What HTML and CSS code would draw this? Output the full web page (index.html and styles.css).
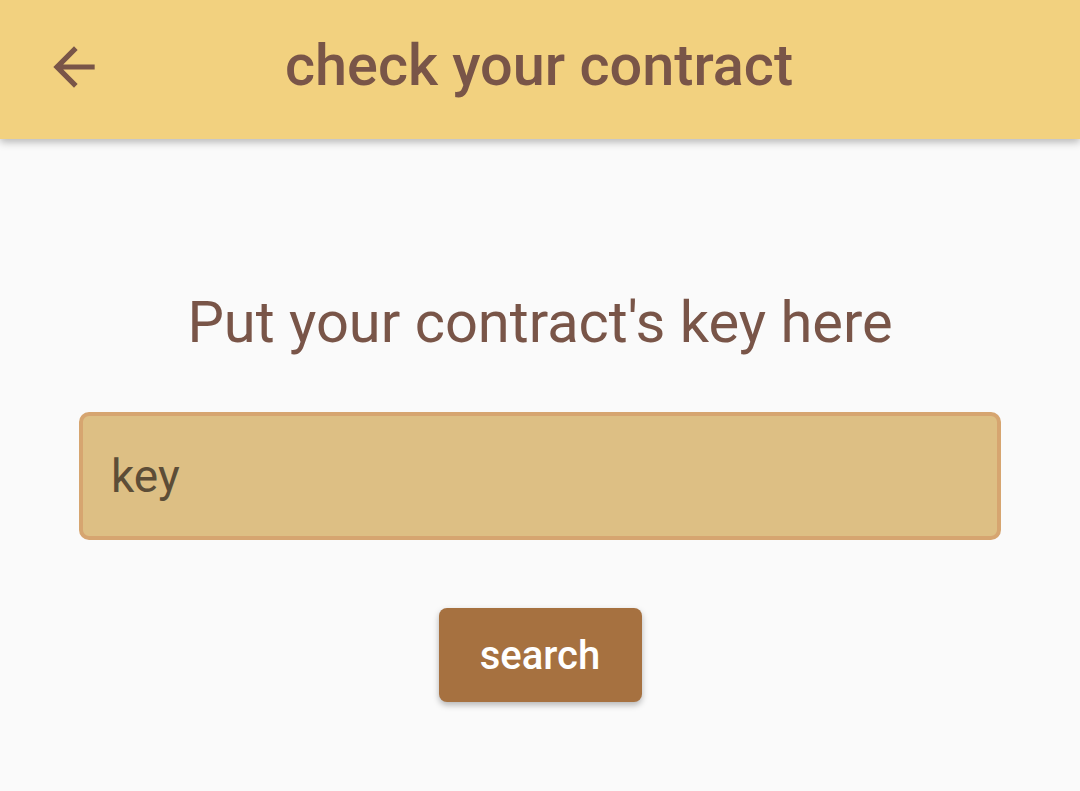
FILE: index.html
```html
<!DOCTYPE html>
<html>
<head>
<meta charset="utf-8">
<link rel="stylesheet" href="styles.css">
</head>
<body>
<header class="appbar">
  <button class="back" aria-label="back">
    <svg viewBox="0 0 24 24" width="62" height="62"><path d="M20 11H7.83l5.59-5.59L12 4l-8 8 8 8 1.41-1.41L7.83 13H20v-2z" fill="#795548"/></svg>
  </button>
  <h1 class="title">check your contract</h1>
</header>
<main class="content">
  <p class="prompt">Put your contract's key here</p>
  <div class="field"><span class="field-text">key</span></div>
  <button class="search">search</button>
</main>
</body>
</html>
```
FILE: styles.css
```css
html, body {
  margin: 0;
  padding: 0;
  background: #fafafa;
  font-family: Roboto, "Noto Sans", sans-serif;
  width: 1080px;
  height: 791px;
  overflow: hidden;
}
.appbar {
  height: 139px;
  background: #f2d17f;
  display: flex;
  align-items: center;
  box-shadow: 0 3px 8px rgba(0,0,0,0.28);
  position: relative;
}
.back {
  border: 0;
  background: none;
  padding: 0;
  margin-left: 43px;
  margin-bottom: 6px;
  width: 62px;
  height: 62px;
  display: flex;
}
.title {
  margin: 0 0 8px 180px;
  font-size: 57.6px;
  font-weight: 500;
  color: #795548;
  letter-spacing: 0;
}
.content {
  display: flex;
  flex-direction: column;
  align-items: center;
  padding-top: 150px;
}
.prompt {
  margin: 0;
  font-size: 57.8px;
  color: #795548;
  line-height: 66px;
}
.field {
  margin-top: 57px;
  width: 914px;
  height: 120px;
  border: 4.5px solid #d6a570;
  border-radius: 10px;
  background: #ddbf84;
  box-sizing: content-box;
  display: flex;
  align-items: center;
}
.field-text {
  margin-left: 28px;
  font-size: 46px;
  color: #5c4d37;
}
.search {
  margin-top: 68px;
  width: 203px;
  height: 94px;
  border: 0;
  border-radius: 8px;
  background: #a67140;
  color: #fff;
  font-family: Roboto, sans-serif;
  font-size: 40px;
  font-weight: 500;
  box-shadow: 0 3px 6px rgba(0,0,0,0.28);
}
```
